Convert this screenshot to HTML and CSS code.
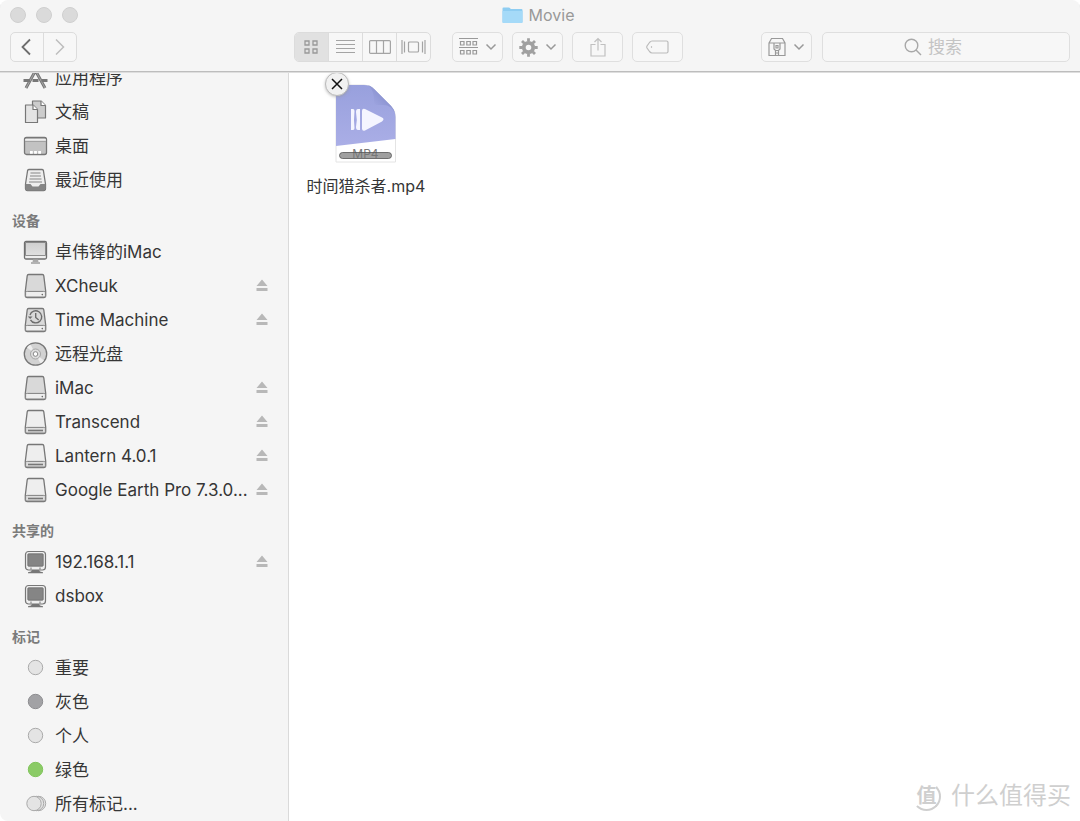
FILE: index.html
```html
<!DOCTYPE html>
<html lang="zh-CN">
<head>
<meta charset="utf-8">
<meta name="viewport" content="width=device-width, initial-scale=1">
<title>Movie</title>
<link rel="stylesheet" href="styles.css">
</head>
<body>
<svg class="sprite" aria-hidden="true">
  <defs>
    <linearGradient id="metal" x1="0" y1="0" x2="0" y2="1"><stop offset="0" stop-color="#cfcfcf"/><stop offset="1" stop-color="#e0e0e0"/></linearGradient>
    <symbol id="drive" viewBox="0 0 25 26">
      <path d="M5.600 1.500h13.800c.9 0 1.300.5 1.400 1.300l1.900 15.400v4.300c0 1.200-.8 2-2 2H4.300c-1.200 0-2-.8-2-2v-4.300L4.200 2.800c.1-.8.5-1.300 1.400-1.300z" fill="#d9d9d9" stroke="#777" stroke-width="1.300"/>
      <path d="M2.600 19.200c.4-.5 1-.8 1.700-.8h16.400c.7 0 1.300.3 1.700.8v3.500c0 .8-.6 1.300-1.500 1.300H4.100c-.9 0-1.500-.5-1.500-1.300z" fill="#eee" stroke="#808080" stroke-width="1"/>
      <circle cx="19.300" cy="21.600" r=".8" fill="#666"/>
    </symbol>
    <symbol id="removable" viewBox="0 0 25 26">
      <path d="M5.600 1.500h13.800c.9 0 1.300.5 1.400 1.300l1.900 15.400v4.300c0 1.200-.8 2-2 2H4.300c-1.200 0-2-.8-2-2v-4.300L4.200 2.800c.1-.8.5-1.300 1.400-1.300z" fill="#eee" stroke="#777" stroke-width="1.300"/>
      <path d="M2.600 19.200c.4-.5 1-.8 1.700-.8h16.400c.7 0 1.300.3 1.700.8v3.500c0 .8-.6 1.300-1.500 1.300H4.100c-.9 0-1.500-.5-1.500-1.300z" fill="#ddd" stroke="#808080" stroke-width="1"/>
      <path d="M5 21.500h15" stroke="#777" stroke-width="1.600"/>
    </symbol>
    <symbol id="server" viewBox="0 0 25 26">
      <rect x="2.500" y="2.500" width="20" height="18.500" rx="3" fill="#eee" stroke="#777" stroke-width="1.200"/>
      <rect x="4.800" y="4.800" width="15.400" height="12.400" rx=".8" fill="#858585" stroke="#6c6c6c" stroke-width=".8"/>
      <path d="M8 18.500v2M17 18.500v2" stroke="#777"/>
      <path d="M9 21h7l1 1.500 3 .8v.9H5v-.9l3-.8z" fill="#777"/>
    </symbol>
    <symbol id="eject" viewBox="0 0 12 14">
      <path d="M6 .5l5.500 6.500H.5zM.5 9h11v3H.5z" fill="#b8b8b8"/>
    </symbol>
    <symbol id="chevron" viewBox="0 0 12 8"><path d="M1.500 1.500L6 6l4.500-4.500" fill="none" stroke="#999" stroke-width="1.500"/></symbol>
  </defs>
</svg>

<div class="window">
  <header class="chrome">
    <div class="titlebar">
      <div class="lights">
        <button class="light" aria-label="关闭"></button>
        <button class="light" aria-label="最小化"></button>
        <button class="light" aria-label="缩放"></button>
      </div>
      <h1 class="title">
        <svg width="21" height="18" viewBox="0 0 21 18" aria-hidden="true"><path d="M.5 2.500q0-1 1-1h5.300q.7 0 1.200.6l.7.9H19.500q1 0 1 1V16q0 1-1 1h-18q-1 0-1-1z" fill="#8ecdf2"/><path d="M.5 5h20v11q0 1-1 1h-18q-1 0-1-1z" fill="#a5daf8"/></svg>
        <span>Movie</span>
      </h1>
    </div>
    <div class="toolbar">
      <div class="leading">
        <div class="segment nav">
          <button class="seg" aria-label="后退"><svg width="14" height="18" viewBox="0 0 14 18"><path d="M10 1.500L2.500 9l7.500 7.500" fill="none" stroke="#6e6e6e" stroke-width="1.800"/></svg></button>
          <button class="seg" aria-label="前进"><svg width="12" height="18" viewBox="0 0 12 18"><path d="M2 1.500L9.500 9 2 16.500" fill="none" stroke="#bdbdbd" stroke-width="1.500"/></svg></button>
        </div>
      </div>
      <div class="segment views">
        <button class="seg active" aria-label="图标"><svg width="16" height="14" viewBox="0 0 16 14" fill="none" stroke="#999" stroke-width="1.300"><path d="M1 1h4v4H1zM9 1h4v4H9zM1 9h4v4H1zM9 9h4v4H9z"/></svg></button>
        <button class="seg" aria-label="列表"><svg width="19" height="14" viewBox="0 0 19 14" fill="none" stroke="#a4a4a4"><path d="M0 .5h19M0 4.500h19M0 8.500h19M0 12.500h19"/></svg></button>
        <button class="seg" aria-label="分栏"><svg width="22" height="14" viewBox="0 0 22 14" fill="none" stroke="#a4a4a4" stroke-width="1.200"><rect x=".6" y=".6" width="20.800" height="12.800" rx="1"/><path d="M7.500 1v12M14.500 1v12"/></svg></button>
        <button class="seg" aria-label="Cover Flow"><svg width="25" height="14" viewBox="0 0 25 14" fill="none" stroke="#a4a4a4" stroke-width="1.200"><rect x="7.500" y="2" width="10" height="10" rx="1"/><path d="M1 0v14M3.500 1.500v11M21.500 1.500v11M24 0v14"/></svg></button>
      </div>
      <div class="tools">
        <button class="tool" aria-label="排列">
          <svg width="19" height="18" viewBox="0 0 19 18" fill="none" stroke="#999"><path d="M0 .5h19M0 9.500h19"/><path d="M1.500 3.500h3.500v3.500h-3.500zM7.800 3.500h3.500v3.500H7.800zM14 3.500h3.500v3.500H14zM1.500 12.500h3.500v3.500h-3.500zM7.800 12.500h3.500v3.500H7.800zM14 12.500h3.500v3.500H14z" stroke-width="1.200"/></svg>
          <svg width="12" height="8"><use href="#chevron"/></svg>
        </button>
        <button class="tool" aria-label="操作">
          <svg width="19" height="19" viewBox="-9.500 -9.500 19 19"><circle r="4.700" fill="none" stroke="#a0a0a0" stroke-width="3.800"/><path d="M0-6v-3.200M0 6v3.200M6 0h3.200M-6 0h-3.200M4.200-4.200l2.300-2.300M-4.200-4.200l-2.300-2.300M4.200 4.200l2.300 2.300M-4.200 4.200l-2.300 2.300" stroke="#a0a0a0" stroke-width="2.800"/></svg>
          <svg width="12" height="8"><use href="#chevron"/></svg>
        </button>
        <button class="tool" aria-label="共享"><svg width="16" height="20" viewBox="0 0 16 20" fill="none" stroke="#c0c0c0" stroke-width="1.200"><path d="M5.500 7.500H1v11.500h14V7.500h-4.500M8 13.500V1.500M4.500 5L8 1.500 11.500 5"/></svg></button>
        <button class="tool" aria-label="标签"><svg width="23" height="14" viewBox="0 0 23 14" fill="none" stroke="#bbb" stroke-width="1.200"><path d="M6 1h14.500q1.500 0 1.500 1.500v9q0 1.500-1.500 1.500H6Q4.800 13 3.500 11.500L1 8Q.5 7 1 6l2.500-3.500Q4.800 1 6 1z"/><circle cx="5.500" cy="7" r=".7" fill="#aaa" stroke="none"/></svg></button>
      </div>
      <div class="trailing">
        <button class="tool" aria-label="压缩工具">
          <svg width="18" height="20" viewBox="0 0 18 20" fill="none" stroke="#999" stroke-width="1.200"><path d="M1 6L3.500 1.500h11L17 6V18.500H1zM1 6h16"/><path d="M6 6v6l1.500 1.500h3L12 12V6M7.500 13.500v5M10.500 13.500v5M7.500 16h3M8 8.500h2v2.500H8z"/></svg>
          <svg width="12" height="8"><use href="#chevron"/></svg>
        </button>
        <label class="search">
          <svg width="18" height="18" viewBox="0 0 18 18" fill="none" stroke="#a8a8a8" stroke-width="1.400"><circle cx="7.500" cy="7.500" r="6.300"/><path d="M12 12l5 5"/></svg>
          <input type="text" placeholder="搜索" aria-label="搜索">
        </label>
      </div>
    </div>
  </header>

  <div class="body">
    <nav class="sidebar" aria-label="边栏">
      <ul class="list scrolled">
        <li class="row"><a class="link" href="#"><svg class="icon" viewBox="0 0 25 26" fill="none" stroke="#777"><path d="M14.500 2L3 23M10.500 2L22 23" stroke-width="3"/><path d="M14.500 2L3 23M10.500 2L22 23" stroke="#bbb" stroke-width=".7"/><path d="M.5 15.500H7M9.500 15.500h6M18.500 15.500h6" stroke-width="3"/></svg><span class="label">应用程序</span></a></li>
        <li class="row"><a class="link" href="#"><svg class="icon" viewBox="0 0 25 26" stroke="#777" stroke-width="1.200" stroke-linejoin="round"><path d="M9.500 2h8.500l4.500 4.500V19h-13z" fill="#ccc"/><path d="M18 2v4.500h4.500" fill="#fff"/><path d="M2.500 6h7.500l4.500 4.500V23.500h-12z" fill="#e4e4e4"/><path d="M10 6v4.500h4.500" fill="#fff"/></svg><span class="label">文稿</span></a></li>
        <li class="row"><a class="link" href="#"><svg class="icon" viewBox="0 0 25 26"><rect x="1.500" y="4.500" width="22" height="17" rx="2" fill="#c2c2c2" stroke="#777" stroke-width="1.300"/><path d="M2.200 7h20.600" stroke="#eee" stroke-width="1.800"/><path d="M2.200 8.300h20.600" stroke="#888" stroke-width=".7"/><path d="M7 19.300h2.800M11.100 19.300h2.800M15.200 19.300h2.800" stroke="#fff" stroke-width="2.800"/></svg><span class="label">桌面</span></a></li>
        <li class="row"><a class="link" href="#"><svg class="icon" viewBox="0 0 25 26"><path d="M5.800 2.500h13.400q1 0 1.200 1l2.100 13.500v4.500q0 2-2 2h-16q-2 0-2-2V17L4.600 3.500q.2-1 1.200-1z" fill="#eee" stroke="#777" stroke-width="1.300"/><path d="M2.500 17h5l2 2.500h6l2-2.500h5v4.500q0 2-2 2h-16q-2 0-2-2z" fill="#858585"/><path d="M7.500 6h10M7 9h11M6.500 12h12M6 15h13" stroke="#858585" stroke-width="1.200"/></svg><span class="label">最近使用</span></a></li>
      </ul>

      <h2 class="heading">设备</h2>
      <ul class="list">
        <li class="row"><a class="link" href="#"><svg class="icon" viewBox="0 0 25 26"><rect x="1.500" y="2.500" width="22" height="17.500" rx="1.500" fill="#eee" stroke="#6f6f6f" stroke-width="1.300"/><path d="M2.500 3.500h20v13h-20z" fill="url(#metal)" stroke="#777" stroke-width=".8"/><path d="M10 20.500h5l.5 2.500h-6z" fill="#aaa"/><path d="M8 24h9" stroke="#888" stroke-width="1.200"/></svg><span class="label">卓伟锋的iMac</span></a></li>
        <li class="row"><a class="link" href="#"><svg class="icon"><use href="#drive"/></svg><span class="label">XCheuk</span></a><button class="eject" aria-label="推出 XCheuk"><svg width="12" height="14"><use href="#eject"/></svg></button></li>
        <li class="row"><a class="link" href="#"><svg class="icon" viewBox="0 0 25 26"><use href="#drive"/><g fill="none" stroke="#6c6c6c" stroke-width="1.400"><path d="M7 8a6 6 0 1 1 .5 4.800M12.700 6v4.500l3 2.500"/><path d="M4.800 9.500h4.700L7.200 12z" fill="#6c6c6c" stroke="none"/></g></svg><span class="label">Time Machine</span></a><button class="eject" aria-label="推出 Time Machine"><svg width="12" height="14"><use href="#eject"/></svg></button></li>
        <li class="row"><a class="link" href="#"><svg class="icon" viewBox="0 0 25 26"><circle cx="12.500" cy="13" r="11.200" fill="#d2d2d2" stroke="#777" stroke-width="1.300"/><path d="M12.500 13L4 6.500A11 11 0 0 1 7.500 3.500zM12.500 13l8.500 6.500a11 11 0 0 1-3.500 3z" fill="#eee"/><circle cx="12.500" cy="13" r="5" fill="#ddd" stroke="#999" stroke-width=".8"/><circle cx="12.500" cy="13" r="2.300" fill="#fff" stroke="#888"/></svg><span class="label">远程光盘</span></a></li>
        <li class="row"><a class="link" href="#"><svg class="icon"><use href="#drive"/></svg><span class="label">iMac</span></a><button class="eject" aria-label="推出 iMac"><svg width="12" height="14"><use href="#eject"/></svg></button></li>
        <li class="row"><a class="link" href="#"><svg class="icon"><use href="#removable"/></svg><span class="label">Transcend</span></a><button class="eject" aria-label="推出 Transcend"><svg width="12" height="14"><use href="#eject"/></svg></button></li>
        <li class="row"><a class="link" href="#"><svg class="icon"><use href="#removable"/></svg><span class="label">Lantern 4.0.1</span></a><button class="eject" aria-label="推出 Lantern"><svg width="12" height="14"><use href="#eject"/></svg></button></li>
        <li class="row"><a class="link" href="#"><svg class="icon"><use href="#removable"/></svg><span class="label">Google Earth Pro 7.3.0...</span></a><button class="eject" aria-label="推出 Google Earth Pro"><svg width="12" height="14"><use href="#eject"/></svg></button></li>
      </ul>

      <h2 class="heading">共享的</h2>
      <ul class="list">
        <li class="row"><a class="link" href="#"><svg class="icon"><use href="#server"/></svg><span class="label">192.168.1.1</span></a><button class="eject" aria-label="推出 192.168.1.1"><svg width="12" height="14"><use href="#eject"/></svg></button></li>
        <li class="row"><a class="link" href="#"><svg class="icon"><use href="#server"/></svg><span class="label">dsbox</span></a></li>
      </ul>

      <h2 class="heading">标记</h2>
      <ul class="list">
        <li class="row"><a class="link" href="#"><svg class="icon" viewBox="0 0 25 26"><circle cx="12.500" cy="12.500" r="7.200" fill="#e4e4e4" stroke="#aaa"/></svg><span class="label">重要</span></a></li>
        <li class="row"><a class="link" href="#"><svg class="icon" viewBox="0 0 25 26"><circle cx="12.500" cy="12.500" r="7.200" fill="#a2a2a5" stroke="#8d8d90"/></svg><span class="label">灰色</span></a></li>
        <li class="row"><a class="link" href="#"><svg class="icon" viewBox="0 0 25 26"><circle cx="12.500" cy="12.500" r="7.200" fill="#e4e4e4" stroke="#aaa"/></svg><span class="label">个人</span></a></li>
        <li class="row"><a class="link" href="#"><svg class="icon" viewBox="0 0 25 26"><circle cx="12.500" cy="12.500" r="7.200" fill="#8bcb66" stroke="#80c45a"/></svg><span class="label">绿色</span></a></li>
        <li class="row"><a class="link" href="#"><svg class="icon" viewBox="0 0 25 26" fill="#e4e4e4" stroke="#aaa"><circle cx="15.500" cy="12.500" r="7.200"/><circle cx="13.500" cy="12.500" r="7.200"/><circle cx="11" cy="12.500" r="7.200"/></svg><span class="label">所有标记...</span></a></li>
      </ul>
    </nav>

    <main class="content">
      <figure class="file">
        <div class="thumb">
          <svg width="62" height="82" viewBox="1 1 62 82" role="img" aria-label="MP4">
            <defs>
              <linearGradient id="paper" x1="0" y1="0" x2="0" y2="1"><stop offset="0" stop-color="#98a0dd"/><stop offset="1" stop-color="#aaaee6"/></linearGradient>
              <linearGradient id="fold" x1="0" y1="1" x2="1" y2="0"><stop offset="0" stop-color="#abb1ea"/><stop offset=".6" stop-color="#8c94d2"/></linearGradient>
            </defs>
            <path d="M2 4q0-2 2-2h26q6 0 10 4l17 17q4.500 5 4.500 11v45H2z" fill="#fff" stroke="#e4e4e4"/>
            <path d="M2 4q0-2 2-2h26q6 0 10 4l17 17q4.500 5 4.500 11v22L2 63z" fill="url(#paper)"/>
            <path d="M34 2q3 1 6 4l17 17q3 3 4 8-3-9-12-9h-6q-3 0-3-4 0-11-6-16z" fill="url(#fold)"/>
            <path d="M17 26h2q1.500 0 1.500 2-1 8.500 0 17 0 2-1.500 2h-2zM26 26h-2q-2 0-2 3 1.500 7.500 0 15 0 3 2 3h2zM28 28q0-3 3-2l17 8.500q3 1.500 0 4L31 47.500q-3 1-3-2z" fill="#f4f5ff"/>
            <text class="format" x="31.500" y="75">MP4</text>
            <rect x="5.500" y="69.500" width="52" height="6" rx="3" fill="#777" fill-opacity=".7" stroke="#555" stroke-opacity=".8"/>
          </svg>
          <button class="remove" aria-label="移除"><svg width="14" height="14" viewBox="0 0 14 14"><path d="M2 2l10 10M12 2L2 12" stroke="#111" stroke-width="1.500"/></svg></button>
        </div>
        <figcaption class="name">时间猎杀者.mp4</figcaption>
      </figure>
      <div class="watermark">
        <span class="seal">值</span>
        <span>什么值得买</span>
      </div>
    </main>
  </div>
</div>
</body>
</html>
```
FILE: styles.css
```css
* { box-sizing: border-box; }

body {
  margin: 0;
  background: #fff;
  color: #363636;
  font-family: Inter, "Noto Sans CJK SC", sans-serif;
  font-size: 17px;
}

button { padding: 0; border: 0; background: none; font: inherit; }
svg { display: block; flex: none; }
.sprite { position: absolute; width: 0; height: 0; }

.window {
  display: flex;
  flex-direction: column;
  height: 100vh;
  border-radius: 8px;
  overflow: hidden;
}

/* Title bar and toolbar */
.chrome {
  flex: none;
  background: #f5f5f5;
  border-bottom: 1px solid #bdbdbd;
  box-shadow: 0 1px 0 #dedede;
  z-index: 1;
}

.titlebar {
  display: grid;
  grid-template-columns: 1fr auto 1fr;
  align-items: center;
  height: 30px;
  padding: 0 14px 0 10px;
}
.lights { display: flex; gap: 10px; }
.light {
  width: 16px;
  height: 16px;
  border: 1px solid #cfcfcf;
  border-radius: 50%;
  background: #dadada;
}
.title {
  display: flex;
  align-items: center;
  gap: 6px;
  margin: 0;
  color: #999;
  font-size: 16px;
  font-weight: 400;
}

.toolbar {
  display: flex;
  padding: 2px 10px 9px;
}
.leading { flex: 0 0 284px; }
.segment {
  display: flex;
  height: 30px;
  border: 1px solid #dcdcdc;
  border-radius: 5px;
  background: #f7f7f7;
  overflow: hidden;
}
.nav { width: 67px; }
.views { flex: 0 0 137px; }
.seg {
  flex: 1;
  display: flex;
  align-items: center;
  justify-content: center;
}
.seg + .seg { border-left: 1px solid #dcdcdc; }
.seg.active { background: #e1e1e1; }
.tools { display: flex; gap: 9px; margin-left: 21px; }
.tool {
  display: flex;
  flex: none;
  align-items: center;
  justify-content: center;
  gap: 7px;
  width: 51px;
  height: 30px;
  border: 1px solid #dfdfdf;
  border-radius: 5px;
  background: #f7f7f7;
}
.trailing { display: flex; flex: 1; gap: 10px; margin-left: 78px; }
.search {
  display: flex;
  flex: 1;
  align-items: center;
  justify-content: center;
  gap: 6px;
  height: 30px;
  padding-right: 24px;
  border: 1px solid #dfdfdf;
  border-radius: 5px;
  background: #f7f7f7;
}
.search input {
  width: 36px;
  padding: 0;
  border: 0;
  outline: 0;
  background: none;
  color: #888;
  font: inherit;
}
.search input::placeholder { color: #c4c4c4; }

/* Sidebar */
.body { display: flex; flex: 1; min-height: 0; }
.sidebar {
  flex: 0 0 289px;
  border-right: 1px solid #dadada;
  background: #f5f5f5;
  overflow: hidden;
}
.list { margin: 0; padding: 0; list-style: none; }
.scrolled { margin-top: -11px; }
.heading {
  height: 38px;
  margin: 0;
  padding: 14px 12px 0;
  color: #7b7b7b;
  font-size: 14px;
  font-weight: 600;
  line-height: 20px;
}
.row {
  display: flex;
  align-items: center;
  height: 34px;
  padding: 0 20px 0 23px;
}
.link {
  display: flex;
  flex: 1;
  align-items: center;
  gap: 7px;
  color: inherit;
  text-decoration: none;
}
.icon { width: 25px; height: 26px; }
.label { line-height: 24px; white-space: nowrap; }

/* Files */
.content { position: relative; flex: 1; background: #fff; }
.file {
  display: flex;
  flex-direction: column;
  align-items: center;
  width: 154px;
  margin: 0;
  padding-top: 12px;
}
.thumb { position: relative; }
.format { fill: #777; font-size: 12px; text-anchor: middle; }
.remove {
  position: absolute;
  top: -12px;
  left: -10px;
  display: flex;
  align-items: center;
  justify-content: center;
  width: 24px;
  height: 24px;
  border: 1px solid #bbb;
  border-radius: 50%;
  background: #f1f1f1;
  box-shadow: 0 1px 3px #9999;
}
.name { margin-top: 8px; font-size: 16px; line-height: 24px; white-space: nowrap; }

.watermark {
  position: absolute;
  right: 9px;
  bottom: 8px;
  display: flex;
  align-items: center;
  gap: 10px;
  color: #cfcfcf;
  font-size: 24px;
  line-height: 34px;
}
.seal {
  display: grid;
  place-items: center;
  width: 29px;
  height: 29px;
  border: 2px solid #cfcfcf;
  border-top-color: transparent;
  border-left-color: transparent;
  border-radius: 50%;
  font-size: 20px;
  font-weight: 700;
  line-height: 25px;
}
```
